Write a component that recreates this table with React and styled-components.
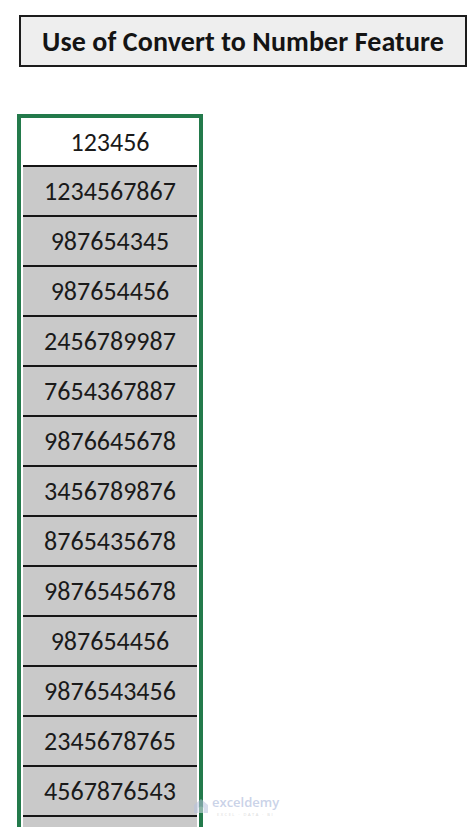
import React from 'react';
import styled, { createGlobalStyle } from 'styled-components';

const GlobalStyle = createGlobalStyle`
  html, body {
    margin: 0;
    padding: 0;
    background: #ffffff;
    overflow: hidden;
  }
  body {
    font-family: Carlito, "Liberation Sans", Arial, sans-serif;
  }
`;

const Page = styled.div`
  position: relative;
  width: 474px;
  height: 827px;
  overflow: hidden;
  padding: 15px 0 0 17px;
  box-sizing: border-box;
`;

const Title = styled.div`
  margin-left: 2px;
  width: 448px;
  height: 52px;
  box-sizing: border-box;
  border: 2px solid #1c1c1c;
  background: #eeeeee;
  display: flex;
  align-items: center;
  justify-content: center;
  font-size: 28px;
  font-weight: 700;
  color: #141414;
  letter-spacing: 0.1px;
`;

const Column = styled.div`
  margin-top: 47px;
  width: 186px;
  box-sizing: border-box;
  border: 4px solid #237a4b;
  border-bottom: none;
  background: #ffffff;
`;

const Cell = styled.div`
  height: ${p => (p.$head ? 47 : 48)}px;
  margin: 0 ${p => (p.$head ? 0 : 2)}px;
  background: ${p => (p.$head ? '#ffffff' : '#c9c9c9')};
  border-top: ${p => (p.$head ? 'none' : '2px solid #151515')};
  display: flex;
  align-items: center;
  justify-content: center;
  font-size: 26px;
  color: #1a1a1a;
`;

const Watermark = styled.div`
  position: absolute;
  left: 193px;
  top: 795px;
  display: flex;
  align-items: center;
  gap: 3px;
  opacity: 0.55;
`;

const MarkText = styled.div`
  display: flex;
  flex-direction: column;
  align-items: center;
  gap: 3px;
`;

const MarkName = styled.span`
  font-family: "Open Sans", sans-serif;
  font-size: 13px;
  line-height: 14px;
  font-weight: 600;
  color: #9fb0d6;
`;

const MarkSub = styled.span`
  font-family: "Open Sans", sans-serif;
  font-size: 4px;
  line-height: 5px;
  letter-spacing: 1.5px;
  color: #b8b8b8;
`;

const numbers = [
  '1234567867', '987654345', '987654456', '2456789987', '7654367887',
  '9876645678', '3456789876', '8765435678', '9876545678', '987654456',
  '9876543456', '2345678765', '4567876543', '',
];

export default function App() {
  return (
    <>
      <GlobalStyle />
      <Page>
        <Title>Use of Convert to Number Feature</Title>
        <Column>
          <Cell $head>123456</Cell>
          {numbers.map((n, i) => (
            <Cell key={i}>{n}</Cell>
          ))}
        </Column>
        <Watermark>
          <svg width="16" height="16" viewBox="0 0 16 16">
            <path d="M1 15 V7 L8 1 L15 7 V15 Z" fill="#b7c2de" />
            <path d="M5 15 V10 Q8 7 11 10 V15 Z" fill="#dfe5f2" />
          </svg>
          <MarkText>
            <MarkName>exceldemy</MarkName>
            <MarkSub>EXCEL · DATA · BI</MarkSub>
          </MarkText>
        </Watermark>
      </Page>
    </>
  );
}
